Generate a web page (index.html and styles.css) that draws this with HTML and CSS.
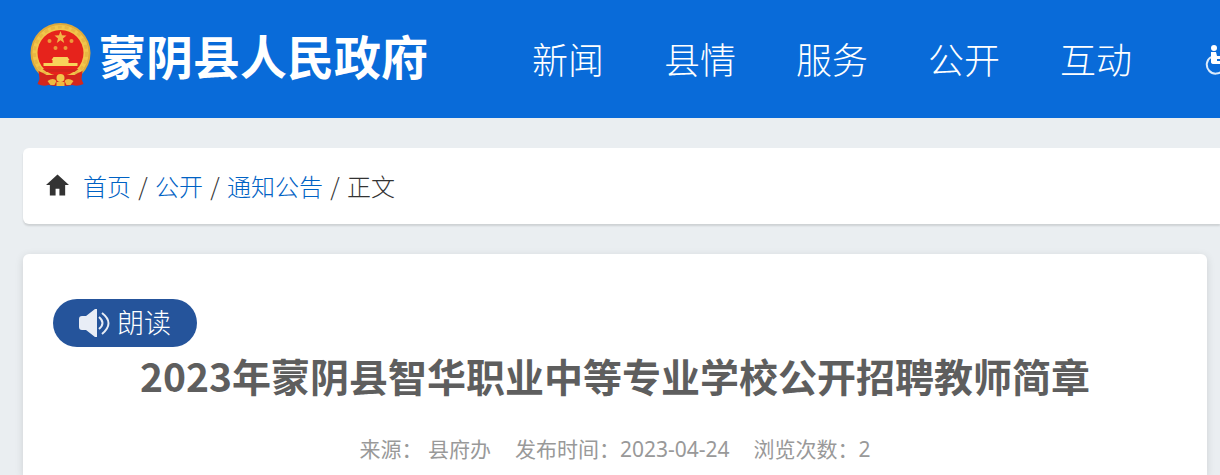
FILE: index.html
```html
<!DOCTYPE html>
<html lang="zh-CN">
<head>
    <meta charset="UTF-8">
    <meta name="viewport" content="width=device-width, initial-scale=1.0">
    <title>2023年蒙阴县智华职业中等专业学校公开招聘教师简章</title>
    <link rel="stylesheet" href="styles.css">
</head>
<body>
    <header class="header">
        <a class="logo" href="#">
            <svg class="emblem" viewBox="0 0 60 64" aria-hidden="true">
                <circle cx="30" cy="30" r="30" fill="#dfa93a"/>
                <circle cx="30" cy="30" r="28" fill="#f2c64b"/>
                <circle cx="30" cy="30" r="26" fill="none" stroke="#e8b743" stroke-width="3" stroke-dasharray="4 3"/>
                <circle cx="30" cy="30" r="23" fill="#e6231c"/>
                <path d="M30 8 L31.500 12.300 L36 12.500 L32.500 15.400 L33.700 20 L30 17.300 L26.300 20 L27.500 15.400 L24 12.500 L28.500 12.300 Z" fill="#f3b548"/>
                <g fill="#ee9a3a">
                    <circle cx="19" cy="18" r="2"/>
                    <circle cx="41" cy="18" r="2"/>
                    <circle cx="25" cy="25" r="2"/>
                    <circle cx="35" cy="25" r="2"/>
                </g>
                <path d="M23 34 H37 L39 37 H38 V40 H47 V43 H13 V40 H22 V37 H21 Z" fill="#f8d45a"/>
                <path d="M8 48 Q13 50 16 52 H44 Q47 50 52 48 L51 56 L53 61 Q47 64 42 62 L36 63 L30 62 L24 63 L18 62 Q13 64 7 61 L9 56 Z" fill="#d3261d"/>
                <path d="M12 46 H48 L44 49 H16 Z" fill="#d3261d"/>
                <circle cx="30" cy="55" r="4" fill="#f2c64b"/>
                <path d="M17 58 Q23 54 26 58 L24 62 L20 62 Z M43 58 Q37 54 34 58 L36 62 L40 62 Z M26 59 H34 V63 H26 Z" fill="#efb940"/>
            </svg>
            <span class="site-name">蒙阴县人民政府</span>
        </a>
        <nav class="nav">
            <a href="#">新闻</a>
            <a href="#">县情</a>
            <a href="#">服务</a>
            <a href="#">公开</a>
            <a href="#">互动</a>
        </nav>
        <a class="access" href="#" aria-label="无障碍">
            <svg viewBox="0 0 28 32" aria-hidden="true">
                <circle cx="9" cy="4" r="3" fill="#fff"/>
                <path d="M6 8 H11 L12 12 H18 V15 H12 V17 H20 L24 26 L21 27 L17 20 H9 Q6 20 6 18 Z" fill="#fff"/>
                <path d="M6 13 A9 9 0 1 0 18 26" fill="none" stroke="#dcebfb" stroke-width="2"/>
            </svg>
        </a>
    </header>

    <nav class="breadcrumb">
        <svg class="home" viewBox="0 0 24 22" aria-hidden="true">
            <path d="M12 0 L24 11 H20 V22 H14 V15 H10 V22 H4 V11 H0 Z" fill="#333"/>
        </svg>
        <a href="#">首页</a>
        <span class="slash">/</span>
        <a href="#">公开</a>
        <span class="slash">/</span>
        <a href="#">通知公告</a>
        <span class="slash">/</span>
        <span>正文</span>
    </nav>

    <main class="article">
        <button class="read" type="button">
            <svg viewBox="0 0 32 28" aria-hidden="true">
                <path d="M3 7 H7 L16 0 H18 V28 H16 L7 21 H3 Q0 21 0 18 V10 Q0 7 3 7 Z" fill="#e8edf6"/>
                <path d="M20 8 Q27 14 20 20 M23 4 Q36 14 23 25" fill="none" stroke="#e8edf6" stroke-width="2"/>
            </svg>
            <span>朗读</span>
        </button>
        <h1>2023年蒙阴县智华职业中等专业学校公开招聘教师简章</h1>
        <div class="meta">
            <span>来源： 县府办</span>
            <span>发布时间：2023-04-24</span>
            <span>浏览次数：2</span>
        </div>
    </main>
</body>
</html>
```
FILE: styles.css
```css
* {
    box-sizing: border-box;
}
body {
    display: flex;
    flex-direction: column;
    min-height: 100vh;
    margin: 0;
    background-color: #eaeef1;
    color: #333;
    font-family: "Noto Sans CJK SC", sans-serif;
    font-weight: 300;
    overflow-x: hidden;
}
a {
    text-decoration: none;
}
.header {
    display: flex;
    align-items: center;
    height: 118px;
    padding-left: 30px;
    background-color: #096bd9;
    white-space: nowrap;
}
.logo {
    display: flex;
    align-items: center;
    gap: 8px;
    padding-bottom: 8px;
    color: #fff;
}
.emblem {
    width: 61px;
    height: 64px;
}
.site-name {
    font-size: 47px;
    font-weight: 700;
    line-height: 64px;
}
.nav {
    display: flex;
    gap: 60px;
    margin-left: 104px;
}
.nav a {
    padding-bottom: 2px;
    color: #fff;
    font-size: 36px;
    line-height: 54px;
}
.access {
    flex: none;
    display: flex;
    margin-left: 73px;
    padding-top: 2px;
}
.access svg {
    width: 28px;
    height: 32px;
}
.breadcrumb {
    display: flex;
    align-items: center;
    height: 76px;
    margin: 30px 0 30px 23px;
    padding: 0 23px 2px;
    border-radius: 6px 0 0 6px;
    background-color: #fff;
    box-shadow: 0 2px 2px rgba(0, 0, 0, 0.12);
    font-size: 24px;
}
.breadcrumb a {
    color: #0062c4;
}
.home {
    width: 23px;
    height: 22px;
    margin-right: 14px;
}
.slash {
    width: 24px;
    text-align: center;
}
.article {
    flex: 1;
    margin: 0 13px 0 23px;
    padding: 45px 30px 0;
    border-radius: 6px 6px 0 0;
    background-color: #fff;
    box-shadow: 0 2px 8px rgba(0, 0, 0, 0.12);
}
.read {
    display: flex;
    align-items: center;
    justify-content: center;
    gap: 6px;
    width: 144px;
    height: 48px;
    padding: 0;
    border: none;
    border-radius: 24px;
    background-color: #25549b;
    color: #fff;
    font-family: inherit;
    font-size: 27px;
    font-weight: 300;
    cursor: pointer;
}
.read svg {
    width: 32px;
    height: 28px;
}
.read span {
    padding-bottom: 4px;
}
h1 {
    margin: 0;
    color: #5e5e5e;
    font-size: 39px;
    font-weight: 700;
    line-height: 56px;
    text-align: center;
}
.meta {
    display: flex;
    justify-content: center;
    gap: 24px;
    margin-top: 30px;
    color: #999;
    font-family: "Noto Sans", "Noto Sans CJK SC", sans-serif;
    font-size: 21px;
    font-weight: 400;
    line-height: 32px;
}
```
